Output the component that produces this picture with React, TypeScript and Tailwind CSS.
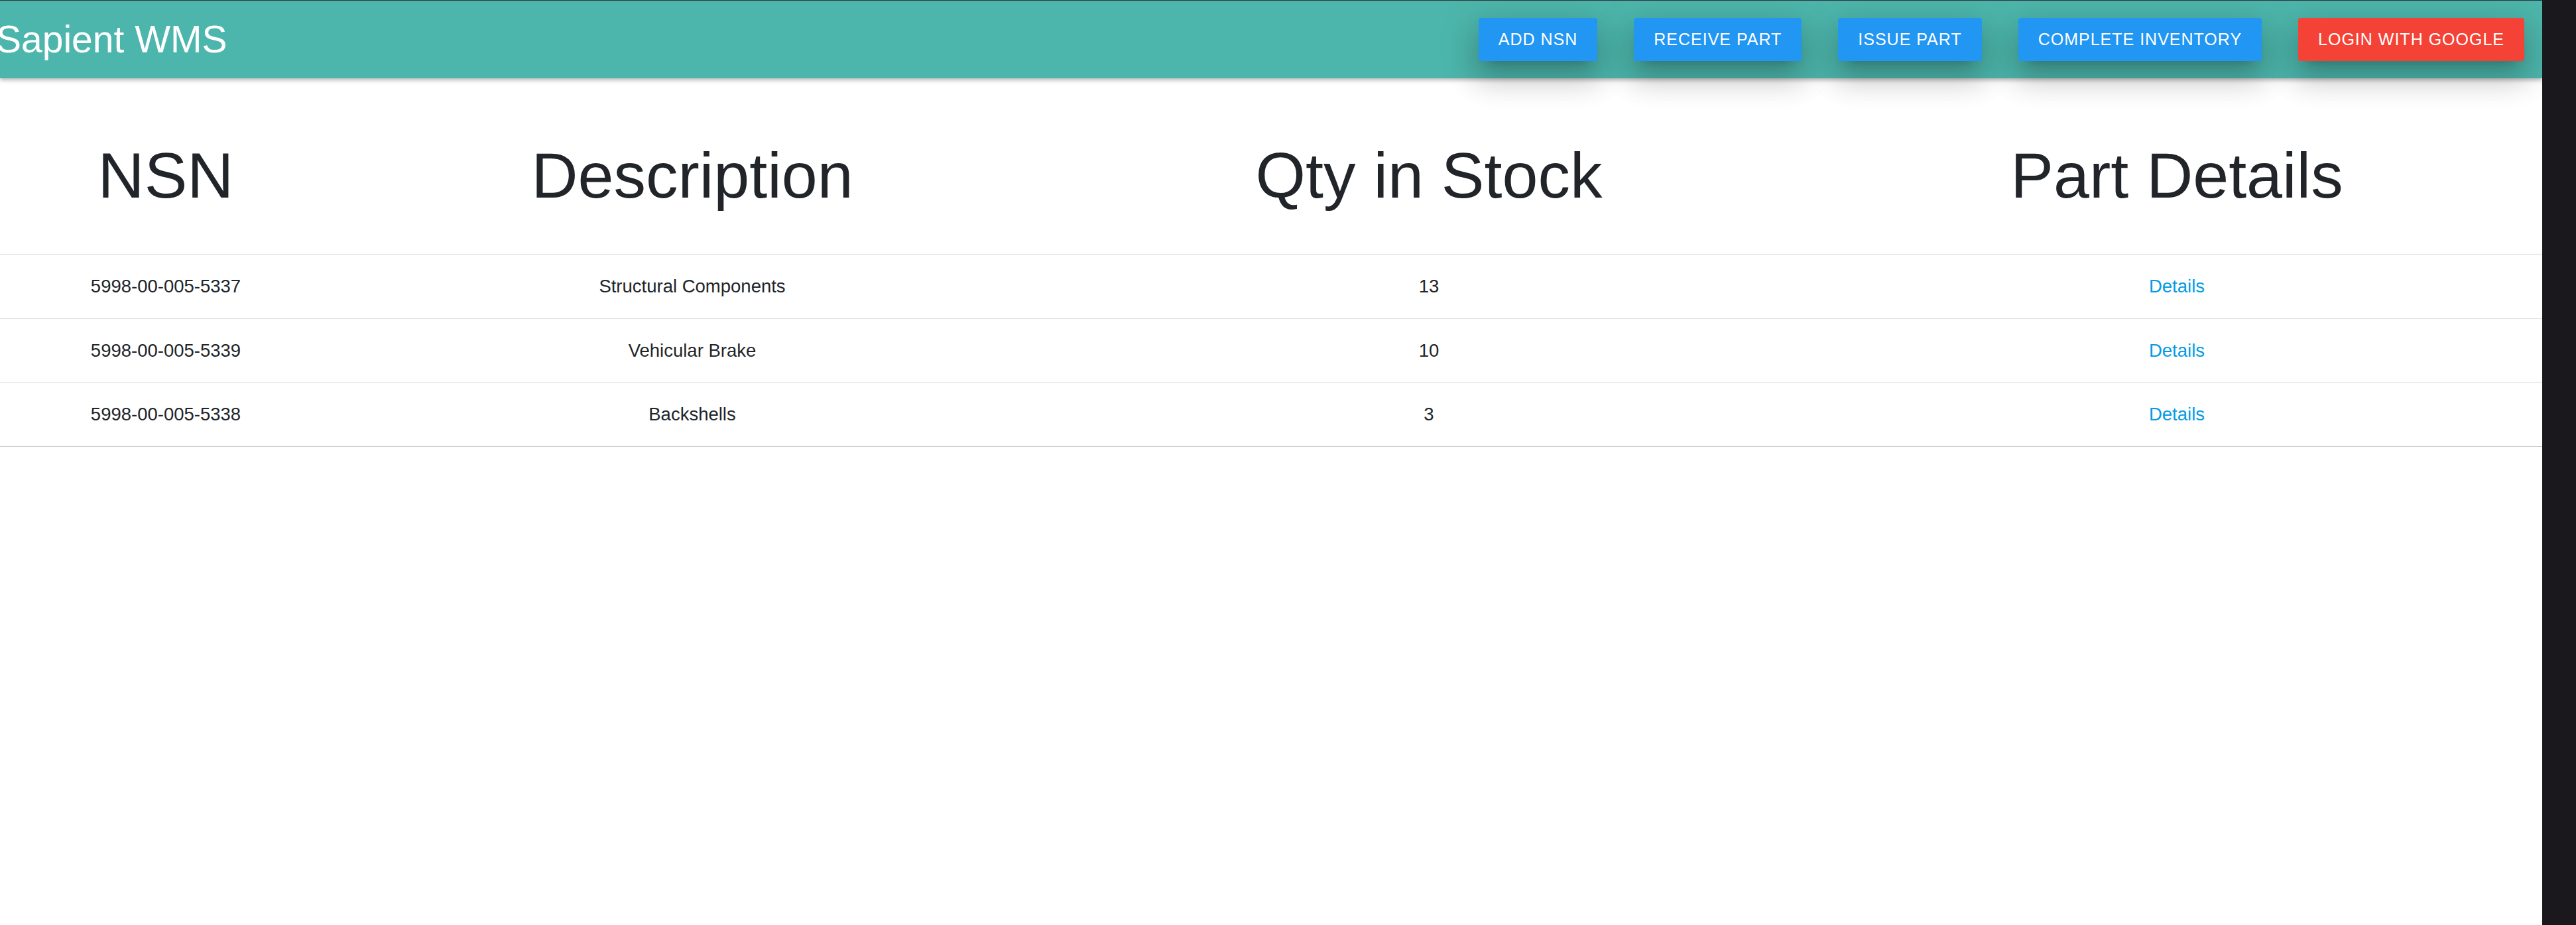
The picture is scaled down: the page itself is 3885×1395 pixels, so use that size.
import React from 'react'

const NAV_BUTTONS = [
  { label: 'Add NSN', color: 'bg-[#2196f3]' },
  { label: 'Receive Part', color: 'bg-[#2196f3]' },
  { label: 'Issue Part', color: 'bg-[#2196f3]' },
  { label: 'Complete Inventory', color: 'bg-[#2196f3]' },
  { label: 'Login with Google', color: 'bg-[#f44336]' },
]

const PARTS = [
  { nsn: '5998-00-005-5337', description: 'Structural Components', qty: 13 },
  { nsn: '5998-00-005-5339', description: 'Vehicular Brake', qty: 10 },
  { nsn: '5998-00-005-5338', description: 'Backshells', qty: 3 },
]

const HEADERS = ['NSN', 'Description', 'Qty in Stock', 'Part Details']

export default function App() {
  return (
    <div className="flex min-h-[1395px] w-full bg-white font-['Liberation_Sans',Arial,sans-serif] text-[#212529]">
      <div className="flex-1 overflow-hidden">
        {/* Navbar */}
        <nav className="relative z-10 flex h-[118px] items-center justify-between border-t border-[#2e3338] bg-[#4db6ac] shadow-[0_3px_6px_rgba(0,0,0,0.28)]">
          <div className="ml-[-6px] text-[57px] leading-none text-white">Sapient WMS</div>
          <div className="flex items-center gap-[55px] pr-[27px]">
            {NAV_BUTTONS.map((b) => (
              <button
                key={b.label}
                className={`${b.color} h-[65px] rounded-[4px] px-[30px] text-[25px] uppercase tracking-[1px] text-white shadow-[0_29px_44px_4px_rgba(0,0,0,0.14),0_11px_55px_9px_rgba(0,0,0,0.12),0_15px_18px_-13px_rgba(0,0,0,0.2)]`}
              >
                {b.label}
              </button>
            ))}
          </div>
        </nav>

        {/* Parts table */}
        <div className="grid grid-cols-[500px_1088px_1134px_1fr]">
          {HEADERS.map((h, i) => (
            <div
              key={h}
              className={
                (i === 3 ? 'pl-[10px] ' : '') +
                'h-[266px] border-b border-[#e0e0e0] pt-[93px] text-center text-[97px] leading-[108px]'
              }
            >
              {h}
            </div>
          ))}
          {PARTS.map((p, i) => {
            const rowCls =
              (i === 1 ? 'h-[96px] ' : 'h-[97px] ') +
              (i === PARTS.length - 1 ? 'border-[#c8c8c8] ' : 'border-[#e0e0e0] ') +
              'flex items-center justify-center border-b text-[27.5px]'
            return (
              <React.Fragment key={p.nsn}>
                <div className={rowCls}>{p.nsn}</div>
                <div className={rowCls}>{p.description}</div>
                <div className={rowCls}>{p.qty}</div>
                <div className={rowCls + ' pl-[10px]'}>
                  <a href="#" className="text-[#039be5]">
                    Details
                  </a>
                </div>
              </React.Fragment>
            )
          })}
        </div>
      </div>
      <div className="w-[51px] shrink-0 bg-[#1a181d]" />
    </div>
  )
}
